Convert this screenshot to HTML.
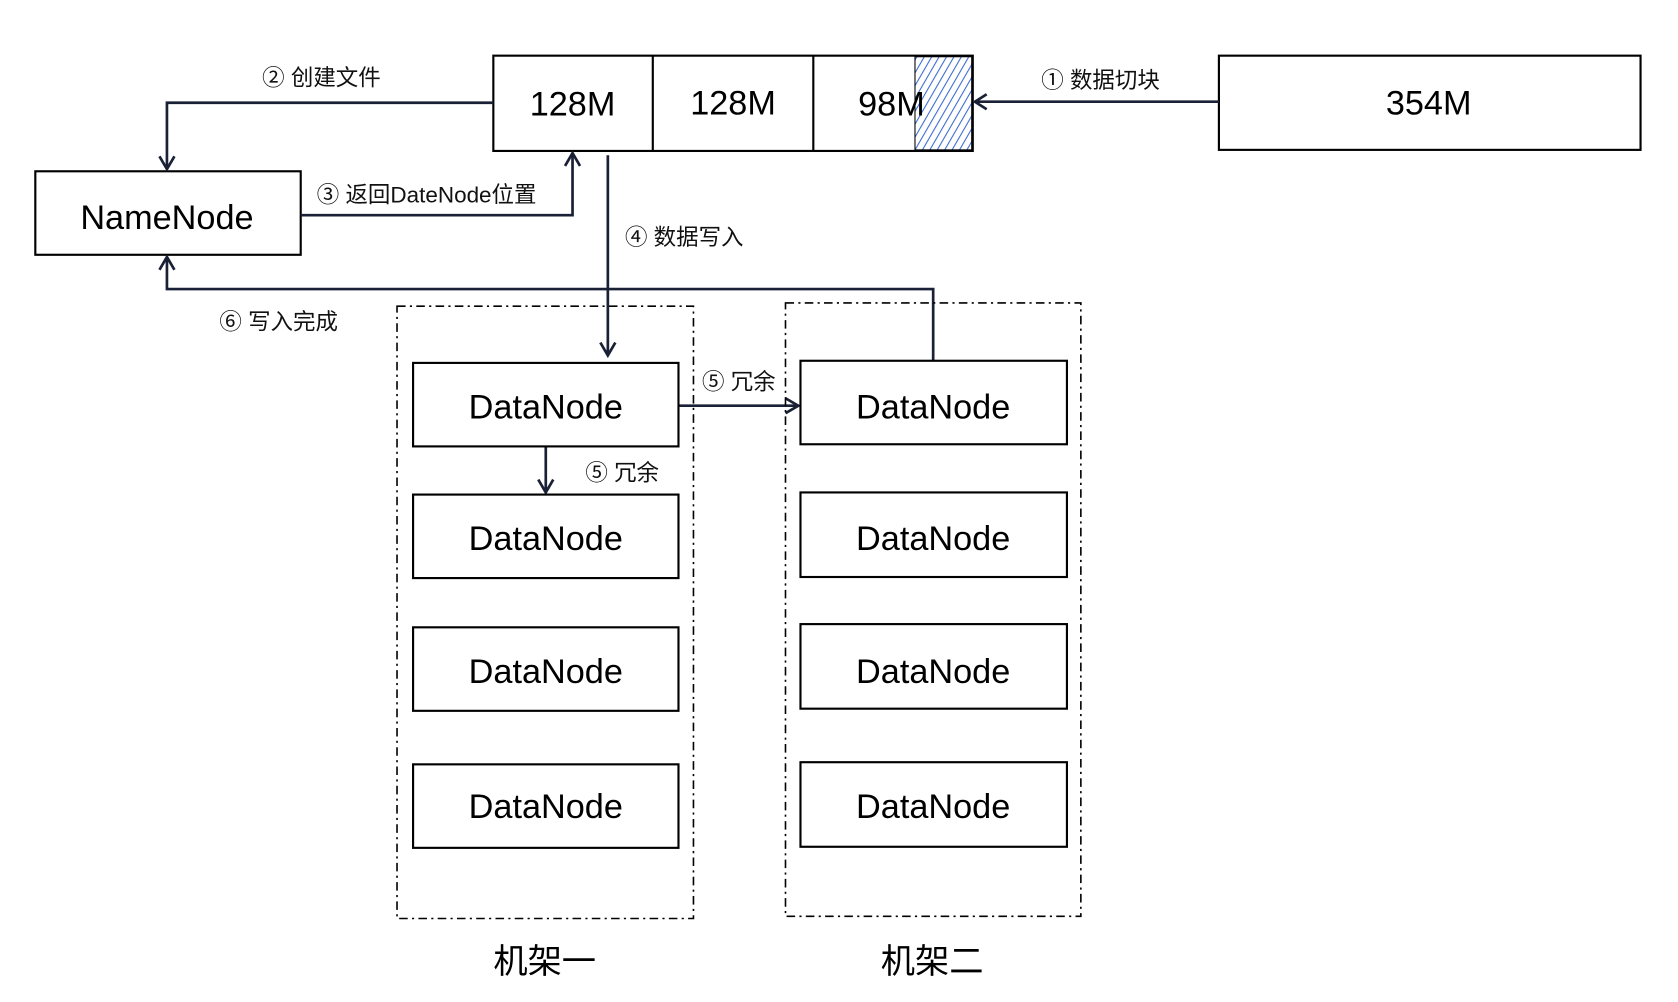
<!DOCTYPE html>
<html><head><meta charset="utf-8"><style>html,body{margin:0;padding:0;background:#fff}svg{display:block}</style></head><body>
<svg width="1678" height="1002" viewBox="0 0 1568 936" preserveAspectRatio="none" xmlns="http://www.w3.org/2000/svg" font-family="Liberation Sans, Noto Sans CJK SC, sans-serif">
<defs>
<pattern id="h" width="6" height="6" patternUnits="userSpaceOnUse" patternTransform="rotate(30)"><rect width="6" height="6" fill="#fff"/><line x1="0" y1="0" x2="0" y2="6" stroke="#3a6bd0" stroke-width="2"/></pattern>
</defs>
<g fill="none" stroke="#000" stroke-width="2">
<rect x="461" y="52" width="448" height="89"/>
<line x1="610" y1="52" x2="610" y2="141"/><line x1="760" y1="52" x2="760" y2="141"/>
<rect x="1139" y="52" width="394" height="88"/>
<rect x="33" y="160" width="248" height="78"/>
</g>
<rect x="855" y="53" width="53" height="87" fill="url(#h)" stroke="#000" stroke-width="1"/>
<g font-size="32" text-anchor="middle" fill="#000">
<text x="535" y="108">128M</text><text x="685" y="107">128M</text><text x="833" y="108">98M</text>
<text x="1335" y="107">354M</text>
<text x="156" y="214">NameNode</text>
</g>
<g fill="none" stroke="#1a2035" stroke-width="2.5">
<path d="M1139 95 H911"/><path d="M922 88 L911 95 L922 102"/>
<path d="M461 96 H156 V158"/><path d="M149 146 L156 158 L163 146"/>
<path d="M281 201 H535 V143"/><path d="M528 155 L535 143 L542 155"/>
<path d="M568 145 V332"/><path d="M561 320 L568 332 L575 320"/>
<path d="M872 337 V270 H156 V240"/><path d="M149 252 L156 240 L163 252"/>
<path d="M634 379 H746"/><path d="M734 372 L746 379 L734 386"/>
<path d="M510 415 V460"/><path d="M503 448 L510 460 L517 448"/>
</g>
<g fill="none" stroke="#000" stroke-width="1.5" stroke-dasharray="8 4 2 4">
<rect x="371" y="286" width="277" height="572"/>
<rect x="734" y="283" width="276" height="573"/>
</g>
<g fill="#fff" stroke="#000" stroke-width="2">
<rect x="386" y="339" width="248" height="78"/><rect x="386" y="462" width="248" height="78"/>
<rect x="386" y="586" width="248" height="78"/><rect x="386" y="714" width="248" height="78"/>
<rect x="748" y="337" width="249" height="78"/><rect x="748" y="460" width="249" height="79"/>
<rect x="748" y="583" width="249" height="79"/><rect x="748" y="712" width="249" height="79"/>
</g>
<g font-size="32" text-anchor="middle" fill="#000">
<text x="510" y="391">DataNode</text><text x="510" y="514">DataNode</text><text x="510" y="638">DataNode</text><text x="510" y="764">DataNode</text>
<text x="872" y="391">DataNode</text><text x="872" y="514">DataNode</text><text x="872" y="638">DataNode</text><text x="872" y="764">DataNode</text>
</g>
<g font-size="21" fill="#111">
<text x="973" y="82">① 数据切块</text>
<text x="245" y="80">② 创建文件</text>
<text x="296" y="189">③ 返回DateNode位置</text>
<text x="584" y="229">④ 数据写入</text>
<text x="205" y="308">⑥ 写入完成</text>
<text x="656" y="364">⑤ 冗余</text>
<text x="547" y="449">⑤ 冗余</text>
</g>
<g font-size="32" text-anchor="middle" fill="#000">
<text x="509" y="909">机架一</text><text x="871" y="909">机架二</text>
</g>
</svg>
</body></html>
